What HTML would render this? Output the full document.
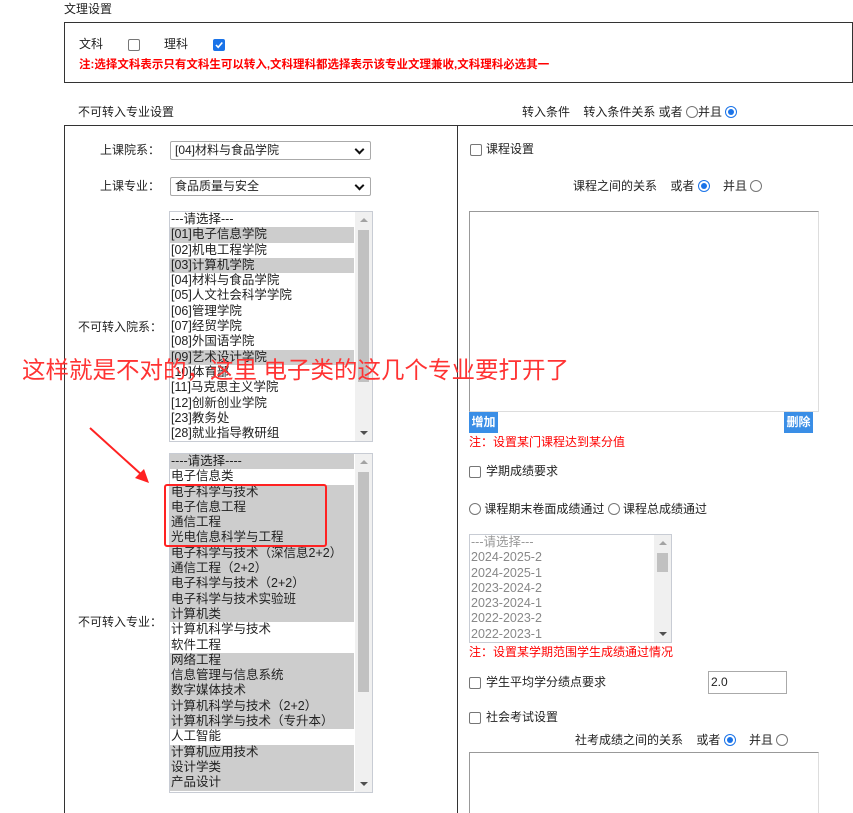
<!DOCTYPE html>
<html style="overflow:hidden;height:813px"><head><meta charset="utf-8"><style>
*{box-sizing:border-box;margin:0;padding:0}
body{width:853px;height:813px;overflow:hidden;background:#fff;font-family:"Liberation Sans","Noto Sans CJK SC",sans-serif;font-size:12px;color:#222;position:relative}
.a{position:absolute;white-space:nowrap;line-height:14px}
.cb{position:absolute;width:12px;height:12px;border:1px solid #767676;border-radius:2px;background:#fff}
.cbk{background:#1a73e8;border-color:#1a73e8}
.rd{display:inline-block;width:12px;height:12px;border:1px solid #767676;border-radius:50%;vertical-align:-2px;background:#fff;position:relative}
.rdk{border-color:#1a73e8}
.rdk:after{content:"";position:absolute;left:2px;top:2px;width:6px;height:6px;border-radius:50%;background:#1a73e8}
.red{color:#f00}
.sel{position:absolute;border:1px solid #aaa;border-radius:2px;background:#fff;height:19px;padding-left:4px;line-height:17px;font-size:12px}
.sel:after{content:"";position:absolute;right:7px;top:4px;width:5px;height:5px;border-right:2px solid #111;border-bottom:2px solid #111;transform:rotate(45deg)}
.lb{position:absolute;border:1px solid #c8ccd4;background:#fff;overflow:hidden}
.lb p{height:15.3px;line-height:15.3px;font-size:12.5px;padding-left:1px;width:184px;color:#222;white-space:nowrap;overflow:hidden}
.g{background:#cdcdcd}
.sb{position:absolute;right:0;top:0;bottom:0;width:17px;background:#f0f0f0}
.th{position:absolute;left:3px;right:3px;background:#c1c1c1}
.up,.dn{position:absolute;left:5px;width:0;height:0;border-left:4px solid transparent;border-right:4px solid transparent}
.up{top:6px;border-bottom:4px solid #a3a3a3}
.dn{bottom:6px;border-top:4px solid #505050}
</style></head><body>
<div class="a" style="left:64px;top:2px">文理设置</div>
<div style="position:absolute;left:64px;top:22px;width:789px;height:61px;border:1px solid #333"></div>
<div class="a" style="left:79px;top:37px">文科</div>
<div class="cb" style="left:128px;top:39px"></div>
<div class="a" style="left:164px;top:37px">理科</div>
<div class="cb cbk" style="left:213px;top:39px"><svg width="10" height="10" style="position:absolute;left:0;top:0"><path d="M2 5l2.2 2.3L8.3 2.5" stroke="#fff" stroke-width="1.6" fill="none"/></svg></div>
<div class="a red" style="left:79px;top:58px;font-weight:bold;font-size:11.5px">注:选择文科表示只有文科生可以转入,文科理科都选择表示该专业文理兼收,文科理科必选其一</div>

<div class="a" style="left:78px;top:105px">不可转入专业设置</div>
<div class="a" style="left:522px;top:105px">转入条件 &nbsp;&nbsp; 转入条件关系 或者 <span class="rd"></span>并且 <span class="rd rdk"></span></div>

<div style="position:absolute;left:64px;top:125px;width:790px;height:700px;border:1px solid #333"></div>
<div style="position:absolute;left:457px;top:125px;width:1px;height:700px;background:#333"></div>

<div class="a" style="left:100px;top:143px">上课院系：</div>
<div class="sel" style="left:170px;top:141px;width:201px">[04]材料与食品学院</div>
<div class="a" style="left:100px;top:179px">上课专业：</div>
<div class="sel" style="left:170px;top:177px;width:201px">食品质量与安全</div>

<div class="a" style="left:78px;top:320px">不可转入院系：</div>
<div class="lb" style="left:169px;top:211px;width:204px;height:231px">
<p>---请选择---</p><p class="g">[01]电子信息学院</p><p>[02]机电工程学院</p><p class="g">[03]计算机学院</p><p>[04]材料与食品学院</p><p>[05]人文社会科学学院</p><p>[06]管理学院</p><p>[07]经贸学院</p><p>[08]外国语学院</p><p class="g">[09]艺术设计学院</p><p>[10]体育部</p><p>[11]马克思主义学院</p><p>[12]创新创业学院</p><p>[23]教务处</p><p>[28]就业指导教研组</p>
<div class="sb"><div class="up"></div><div class="th" style="top:18px;height:152px"></div><div class="dn"></div></div>
</div>

<div class="a" style="left:78px;top:615px">不可转入专业：</div>
<div class="lb" style="left:169px;top:453px;width:204px;height:340px">
<p class="g">----请选择----</p><p>电子信息类</p><p class="g">电子科学与技术</p><p class="g">电子信息工程</p><p class="g">通信工程</p><p class="g">光电信息科学与工程</p><p class="g">电子科学与技术（深信息2+2）</p><p class="g">通信工程（2+2）</p><p class="g">电子科学与技术（2+2）</p><p class="g">电子科学与技术实验班</p><p class="g">计算机类</p><p>计算机科学与技术</p><p>软件工程</p><p class="g">网络工程</p><p class="g">信息管理与信息系统</p><p class="g">数字媒体技术</p><p class="g">计算机科学与技术（2+2）</p><p class="g">计算机科学与技术（专升本）</p><p>人工智能</p><p class="g">计算机应用技术</p><p class="g">设计学类</p><p class="g">产品设计</p>
<div class="sb"><div class="up"></div><div class="th" style="top:18px;height:220px"></div><div class="dn"></div></div>
</div>
<div style="position:absolute;left:164px;top:484px;width:163px;height:63px;border:2px solid #f22;border-radius:3px"></div>

<div class="cb" style="left:470px;top:144px"></div>
<div class="a" style="left:486px;top:142px">课程设置</div>
<div class="a" style="left:573px;top:179px">课程之间的关系 &nbsp;&nbsp; 或者 <span class="rd rdk"></span> &nbsp;&nbsp; 并且 <span class="rd"></span></div>
<div style="position:absolute;left:469px;top:211px;width:350px;height:201px;border:1px solid #999;border-color:#999 #ddd #ddd #999"></div>
<div style="position:absolute;left:469px;top:412px;width:29px;height:21px;background:#3a8ee6;color:#fff;font-weight:bold;line-height:21px;text-align:center">增加</div>
<div style="position:absolute;left:784px;top:412px;width:29px;height:21px;background:#3a8ee6;color:#fff;font-weight:bold;line-height:21px;text-align:center">删除</div>
<div class="a red" style="left:469px;top:435px">注：设置某门课程达到某分值</div>
<div class="cb" style="left:469px;top:466px"></div>
<div class="a" style="left:486px;top:464px">学期成绩要求</div>
<div class="a" style="left:469px;top:502px"><span class="rd"></span> 课程期末卷面成绩通过 <span class="rd"></span> 课程总成绩通过</div>
<div class="lb" style="left:469px;top:534px;width:203px;height:109px">
<p style="color:#999">---请选择---</p><p style="color:#888">2024-2025-2</p><p style="color:#888">2024-2025-1</p><p style="color:#888">2023-2024-2</p><p style="color:#888">2023-2024-1</p><p style="color:#888">2022-2023-2</p><p style="color:#888">2022-2023-1</p>
<div class="sb"><div class="up"></div><div class="th" style="top:18px;height:19px"></div><div class="dn"></div></div>
</div>
<div class="a red" style="left:469px;top:645px">注：设置某学期范围学生成绩通过情况</div>
<div class="cb" style="left:469px;top:677px"></div>
<div class="a" style="left:486px;top:675px">学生平均学分绩点要求</div>
<div style="position:absolute;left:708px;top:671px;width:79px;height:23px;border:1px solid #aaa;padding-left:2px;line-height:21px">2.0</div>
<div class="cb" style="left:469px;top:712px"></div>
<div class="a" style="left:486px;top:710px">社会考试设置</div>
<div class="a" style="left:575px;top:733px">社考成绩之间的关系 &nbsp;&nbsp; 或者 <span class="rd rdk"></span> &nbsp;&nbsp; 并且 <span class="rd"></span></div>
<div style="position:absolute;left:469px;top:752px;width:350px;height:70px;border:1px solid #999;border-color:#999 #ddd #ddd #999"></div>

<div class="a" style="left:22px;top:356px;font-size:23.5px;line-height:28px;color:#f33">这样就是不对的，这里 电子类的这几个专业要打开了</div>
<svg style="position:absolute;left:0;top:0" width="853" height="813"><line x1="90" y1="428" x2="143" y2="476" stroke="#f22" stroke-width="2"/><path d="M149 483L135 478L144 469Z" fill="#f22"/></svg>
</body></html>
